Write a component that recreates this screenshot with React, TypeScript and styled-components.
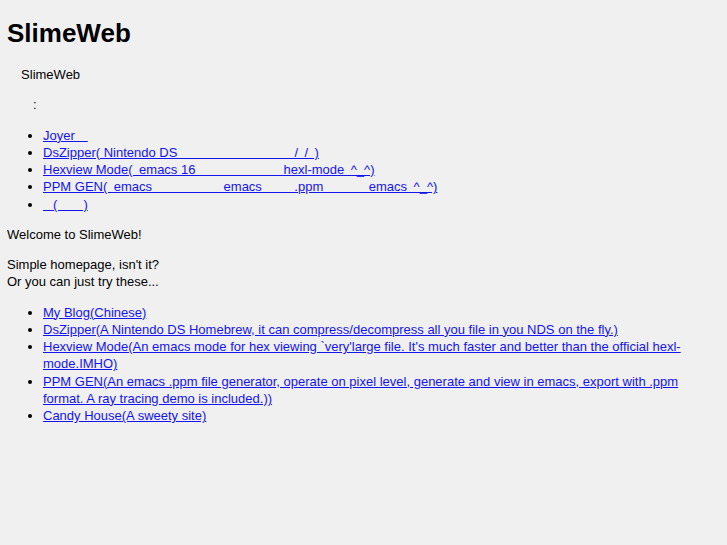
import React from "react";
import styled, { createGlobalStyle } from "styled-components";

const GlobalStyle = createGlobalStyle`
  html {
    background: #f0f0f0;
  }
  body {
    margin: 8px 7px;
    background: #f0f0f0;
    color: #000;
    font-family: "Liberation Sans", Arial, "Noto Sans CJK SC", sans-serif;
    font-size: 13px;
    line-height: 17.25px;
  }
`;

const Title = styled.h1`
  font-size: 26px;
  font-weight: bold;
  line-height: normal;
  margin: 10px 0 17px;
`;

const Para = styled.p`
  margin: 13px 0;
`;

const LinkList = styled.ul`
  margin: 13px 0;
  padding-left: 36px;
  list-style: disc;
`;

const Item = styled.li`
  margin: 0;
`;

const Link = styled.a`
  color: #1414ee;
  text-decoration: underline;
`;

// the original page's CJK glyphs rendered blank; keep their widths with en spaces
const e = (n: number) => "\u2002".repeat(n);

const cnLinks = [
  "Joyer" + e(2),
  "DsZipper( Nintendo DS" + e(18) + "/" + e(1) + "/" + e(1) + ")",
  "Hexview Mode(" + e(1) + "emacs 16" + e(13) + " hexl-mode" + e(1) + "^_^)",
  "PPM GEN(" + e(1) + "emacs" + e(11) + "emacs" + e(5) + ".ppm" + e(7) + "emacs" + e(1) + "^_^)",
  e(1) + " (" + e(4) + ")",
];

const enLinks = [
  "My Blog(Chinese)",
  "DsZipper(A Nintendo DS Homebrew, it can compress/decompress all you file in you NDS on the fly.)",
  "Hexview Mode(An emacs mode for hex viewing `very'large file. It's much faster and better than the official hexl-mode.IMHO)",
  "PPM GEN(An emacs .ppm file generator, operate on pixel level, generate and view in emacs, export with .ppm format. A ray tracing demo is included.))",
  "Candy House(A sweety site)",
];

export default function App() {
  return (
    <>
      <GlobalStyle />
      <Title>SlimeWeb</Title>
      <Para>{e(2) + "\u200ASlimeWeb"}</Para>
      <Para>{e(4) + ":"}</Para>
      <LinkList>
        {cnLinks.map((t, i) => (
          <Item key={i}>
            <Link href="#">{t}</Link>
          </Item>
        ))}
      </LinkList>
      <Para>Welcome to SlimeWeb!</Para>
      <Para>
        Simple homepage, isn't it?
        <br />
        Or you can just try these...
      </Para>
      <LinkList>
        {enLinks.map((t, i) => (
          <Item key={i}>
            <Link href="#">{t}</Link>
          </Item>
        ))}
      </LinkList>
    </>
  );
}
